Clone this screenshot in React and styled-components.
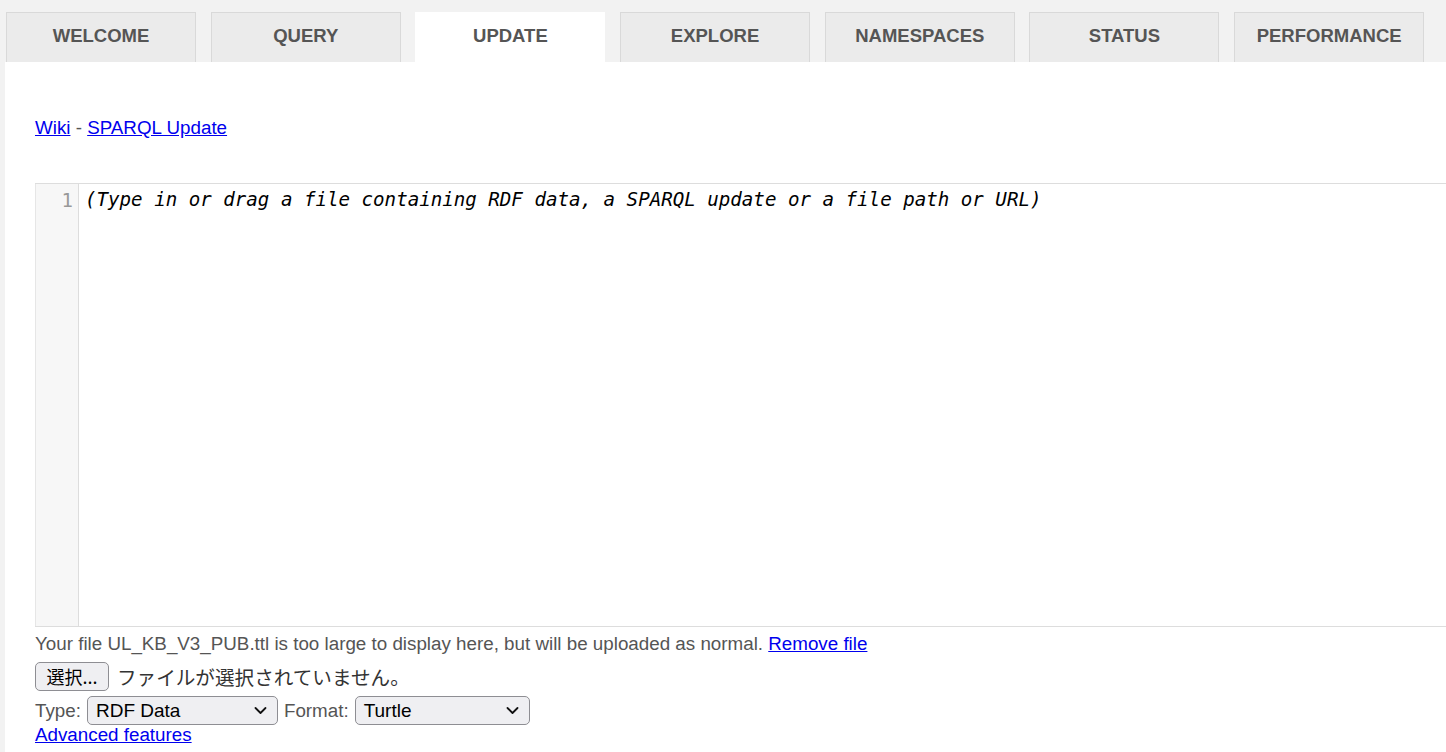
import React from 'react'
import styled, { createGlobalStyle } from 'styled-components'

const GlobalStyle = createGlobalStyle`
  html, body {
    margin: 0;
    padding: 0;
    background: #f2f2f2;
    overflow: hidden;
    font-family: "Liberation Sans", Arial, "Noto Sans CJK JP", sans-serif;
  }
`

const Page = styled.div`
  display: flex;
  flex-direction: column;
  height: 752px;
`

const Tabs = styled.nav`
  display: flex;
  gap: 14.7px;
  padding: 12px 0 0 6px;
`

const Tab = styled.div`
  box-sizing: border-box;
  width: 190px;
  height: 50px;
  padding-bottom: 3px;
  display: flex;
  align-items: center;
  justify-content: center;
  background: ${({ active }) => (active ? '#fff' : '#ebebeb')};
  border: 1px solid ${({ active }) => (active ? '#fff' : '#d9d9d9')};
  border-bottom: none;
  color: #555;
  font-weight: bold;
  font-size: 18.5px;
  font-family: "Liberation Sans", Arial, sans-serif;
`

const Panel = styled.main`
  flex: 1;
  margin-left: 5px;
  background: #fff;
  padding: 55px 0 0 30px;
  color: #555;
  font-size: 18.8px;
`

const Link = styled.a`
  color: #0000ee;
  text-decoration: underline;
  cursor: pointer;
`

const Links = styled.div`
  line-height: 22px;
  color: #555;
`

const Editor = styled.div`
  display: flex;
  margin-top: 44px;
  margin-right: -20px;
  height: 442px;
  border-top: 1px solid #ddd;
  border-bottom: 1px solid #ddd;
  background: #fff;
`

const Gutter = styled.div`
  box-sizing: border-box;
  width: 44px;
  background: #f7f7f7;
  border-left: 1px solid #e6e6e6;
  border-right: 1px solid #ddd;
  padding: 5px 5px 0 0;
  text-align: right;
  color: #999;
  font-family: "DejaVu Sans Mono", monospace;
  font-size: 19px;
  line-height: 22px;
`

const Code = styled.div`
  flex: 1;
  padding: 5px 0 0 6px;
  color: #000;
  font-family: "DejaVu Sans Mono", monospace;
  font-style: italic;
  font-size: 19.15px;
  line-height: 22px;
  white-space: pre;
`

const Note = styled.div`
  margin-top: 6px;
  line-height: 22px;
  color: #555;
`

const FileRow = styled.div`
  display: flex;
  align-items: center;
  gap: 8px;
  margin-top: 7px;
  color: #333;
  font-size: 19.6px;
  font-family: "Liberation Sans", Arial, "Noto Sans CJK JP", sans-serif;
`

const PickButton = styled.button`
  box-sizing: border-box;
  height: 29px;
  width: 74px;
  padding: 0;
  border: 1px solid #8e8e93;
  border-radius: 5px;
  background: #efeff2;
  color: #000;
  font-size: 18px;
  font-family: "Noto Sans CJK JP", "Liberation Sans", sans-serif;
  line-height: 27px;
`

const SelectRow = styled.div`
  display: flex;
  align-items: center;
  gap: 6px;
  margin-top: 5px;
  color: #555;
`

const Select = styled.div`
  box-sizing: border-box;
  width: ${({ w }) => w}px;
  height: 29px;
  display: flex;
  align-items: center;
  justify-content: space-between;
  padding: 0 10px 0 8px;
  border: 1px solid #8e8e93;
  border-radius: 5px;
  background: #efeff2;
  color: #000;
  font-size: 19px;
`

const Chevron = () => (
  <svg width="13" height="9" viewBox="0 0 13 9">
    <path d="M1.5 2 L6.5 7 L11.5 2" fill="none" stroke="#111" strokeWidth="1.8" strokeLinecap="round" strokeLinejoin="round" />
  </svg>
)

const Advanced = styled.div`
  line-height: 20px;
`

export default function App() {
  return (
    <Page>
      <GlobalStyle />
      <Tabs>
        {['WELCOME', 'QUERY', 'UPDATE', 'EXPLORE', 'NAMESPACES', 'STATUS', 'PERFORMANCE'].map((t) => (
          <Tab key={t} active={t === 'UPDATE'}>
            {t}
          </Tab>
        ))}
      </Tabs>
      <Panel>
        <Links>
          <Link>Wiki</Link> - <Link>SPARQL Update</Link>
        </Links>
        <Editor>
          <Gutter>1</Gutter>
          <Code>(Type in or drag a file containing RDF data, a SPARQL update or a file path or URL)</Code>
        </Editor>
        <Note>
          Your file UL_KB_V3_PUB.ttl is too large to display here, but will be uploaded as normal.{' '}
          <Link>Remove file</Link>
        </Note>
        <FileRow>
          <PickButton>選択...</PickButton>
          <span>ファイルが選択されていません。</span>
        </FileRow>
        <SelectRow>
          <span>Type:</span>
          <Select w={191}>
            RDF Data <Chevron />
          </Select>
          <span>Format:</span>
          <Select w={175}>
            Turtle <Chevron />
          </Select>
        </SelectRow>
        <Advanced>
          <Link>Advanced features</Link>
        </Advanced>
      </Panel>
    </Page>
  )
}
